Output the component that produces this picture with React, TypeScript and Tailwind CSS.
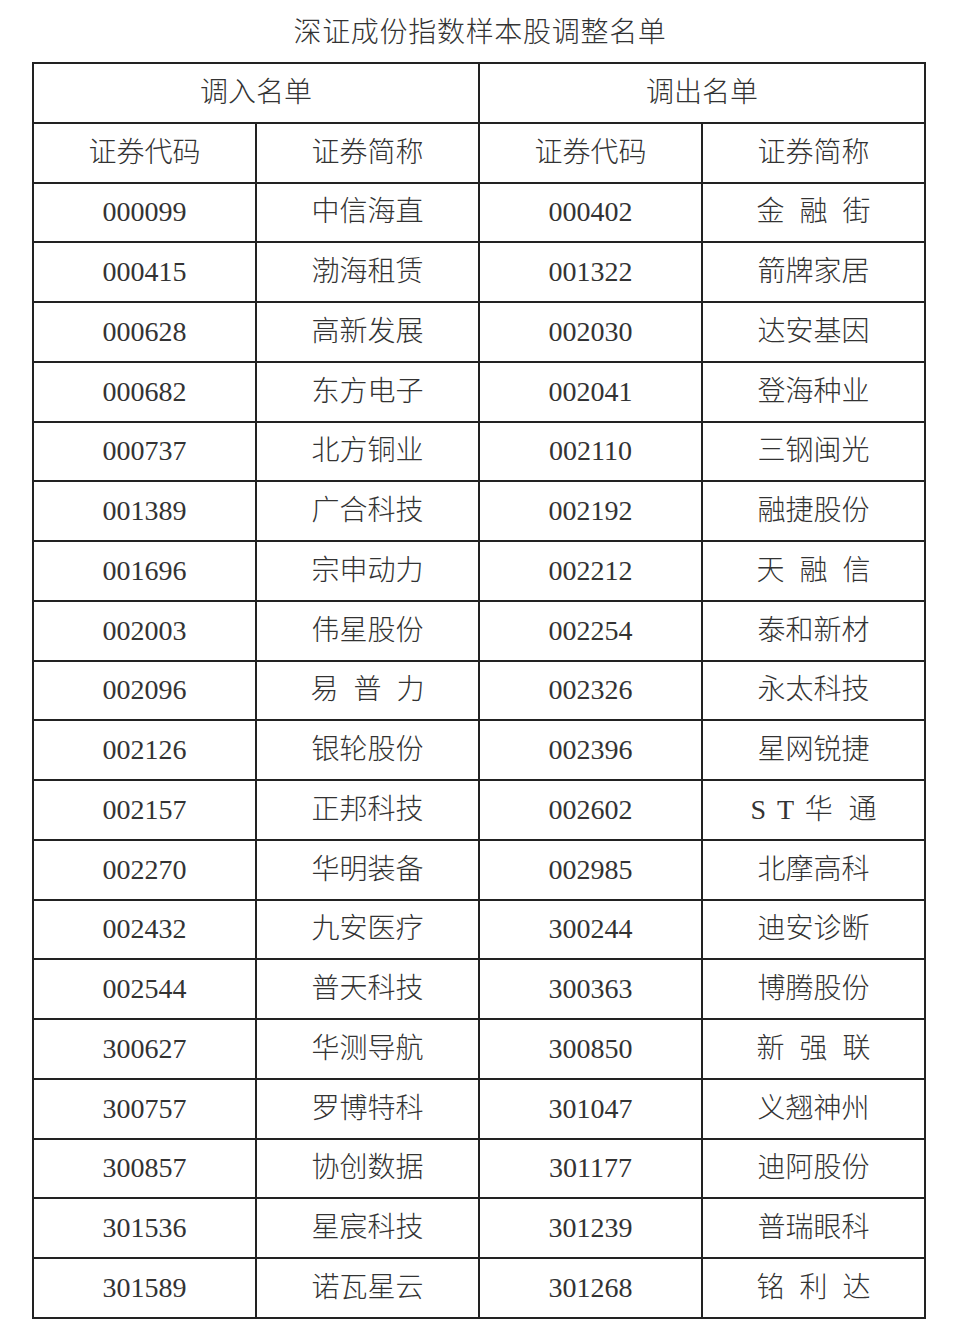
import React from 'react'

// 调入 / 调出名单，每行：[调入代码, 调入简称, 调出代码, 调出简称]
const rows: [string, string, string, string][] = [
  ['000099', '中信海直', '000402', '金 融 街'],
  ['000415', '渤海租赁', '001322', '箭牌家居'],
  ['000628', '高新发展', '002030', '达安基因'],
  ['000682', '东方电子', '002041', '登海种业'],
  ['000737', '北方铜业', '002110', '三钢闽光'],
  ['001389', '广合科技', '002192', '融捷股份'],
  ['001696', '宗申动力', '002212', '天 融 信'],
  ['002003', '伟星股份', '002254', '泰和新材'],
  ['002096', '易 普 力', '002326', '永太科技'],
  ['002126', '银轮股份', '002396', '星网锐捷'],
  ['002157', '正邦科技', '002602', 'S T 华 通'],
  ['002270', '华明装备', '002985', '北摩高科'],
  ['002432', '九安医疗', '300244', '迪安诊断'],
  ['002544', '普天科技', '300363', '博腾股份'],
  ['300627', '华测导航', '300850', '新 强 联'],
  ['300757', '罗博特科', '301047', '义翘神州'],
  ['300857', '协创数据', '301177', '迪阿股份'],
  ['301536', '星宸科技', '301239', '普瑞眼科'],
  ['301589', '诺瓦星云', '301268', '铭 利 达'],
]

function Name({ text }: { text: string }) {
  // 带空格的简称两端对齐，占满四字宽度
  if (!text.includes(' ')) return <span>{text}</span>
  const wide = text.startsWith('S T')
  return (
    <span
      className={`inline-block [text-align-last:justify] ${wide ? 'w-[126px]' : 'w-[114px]'}`}
    >
      {text}
    </span>
  )
}

const cell = 'border-2 border-[#222] text-center align-middle p-0'

export default function App() {
  return (
    <div className="w-[960px] min-h-[1341px] bg-white text-[#333] font-light font-['Liberation_Serif','Noto_Sans_CJK_SC',serif] text-[28px]">
      <div className="pt-[12px] text-center leading-[42px] tracking-[0.7px]">深证成份指数样本股调整名单</div>
      <table className="ml-[32px] mt-[8px] w-[894px] border-collapse table-fixed">
        <tbody>
          <tr className="h-[59.76px]">
            <td colSpan={2} className={cell}>调入名单</td>
            <td colSpan={2} className={cell}>调出名单</td>
          </tr>
          <tr className="h-[59.76px]">
            <td className={cell}>证券代码</td>
            <td className={cell}>证券简称</td>
            <td className={cell}>证券代码</td>
            <td className={cell}>证券简称</td>
          </tr>
          {rows.map(r => (
            <tr key={r[0]} className="h-[59.76px]">
              <td className={cell}>{r[0]}</td>
              <td className={cell}><Name text={r[1]} /></td>
              <td className={cell}>{r[2]}</td>
              <td className={cell}><Name text={r[3]} /></td>
            </tr>
          ))}
        </tbody>
      </table>
    </div>
  )
}
